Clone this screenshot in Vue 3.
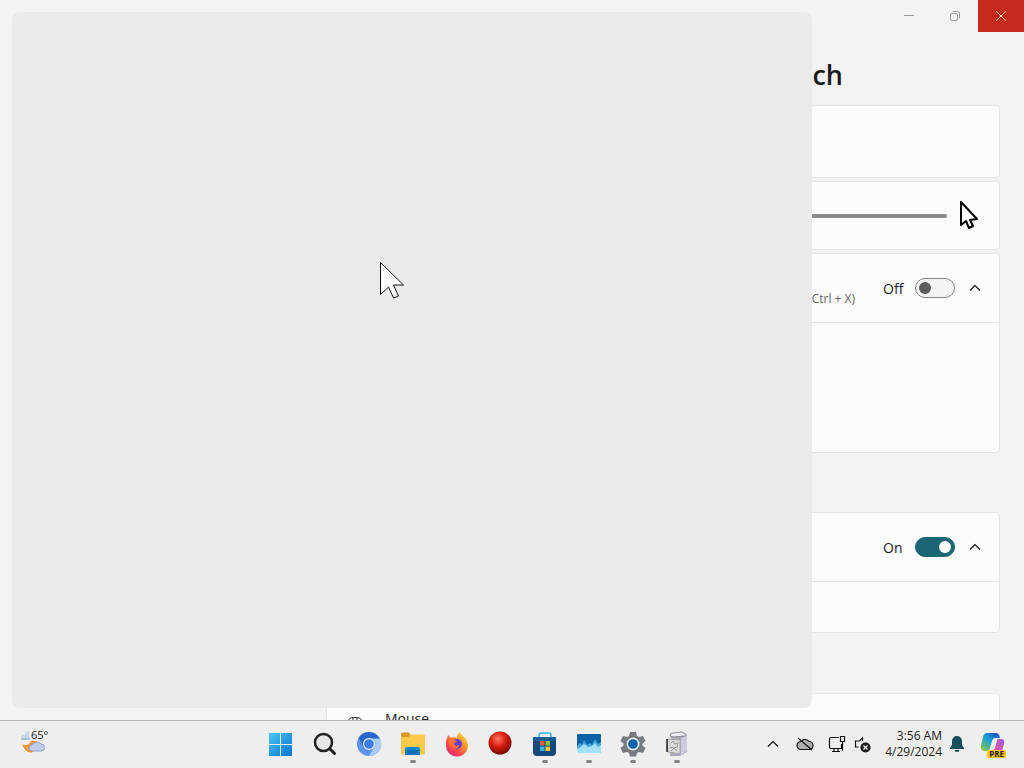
<template>
  <div class="desktop">
    <div class="settings">
      <!-- window buttons -->
      <header class="titlebar">
        <button class="win-btn" aria-label="Minimize">
          <svg width="12" height="12" viewBox="0 0 12 12"><path d="M1 5.5h10" /></svg>
        </button>
        <button class="win-btn" aria-label="Restore">
          <svg width="12" height="12" viewBox="0 0 12 12">
            <rect x="1.5" y="3.5" width="7" height="7" rx="1.5" />
            <path d="M3.5 1.5h5a2 2 0 0 1 2 2v5" />
          </svg>
        </button>
        <button class="win-btn close" aria-label="Close">
          <svg width="12" height="12" viewBox="0 0 12 12"><path d="M1 1l10 10M11 1L1 11" /></svg>
        </button>
      </header>

      <main class="content">
        <h1>ch</h1>

        <section class="card preview"></section>

        <section class="card">
          <div class="row">
            <input v-model="pointerSize" class="slider" type="range" min="0" max="100" aria-label="Size" />
            <svg class="size-icon" width="20" height="30" viewBox="0 0 20 30">
              <path d="M2 1v23l5-4 3 7 4-2-3-6 7-1z" />
            </svg>
          </div>
        </section>

        <section class="card tall">
          <div class="row">
            <span class="hint">Ctrl + X)</span>
            <label class="toggle">
              <span>{{ indicator ? 'On' : 'Off' }}</span>
              <input v-model="indicator" type="checkbox" />
            </label>
            <button class="expand" aria-label="Collapse">
              <svg width="12" height="12" viewBox="0 0 12 12"><path d="M1 8.5l5-5 5 5" /></svg>
            </button>
          </div>
        </section>

        <section class="card touch">
          <div class="row">
            <label class="toggle">
              <span>{{ touch ? 'On' : 'Off' }}</span>
              <input v-model="touch" type="checkbox" />
            </label>
            <button class="expand" aria-label="Collapse">
              <svg width="12" height="12" viewBox="0 0 12 12"><path d="M1 8.5l5-5 5 5" /></svg>
            </button>
          </div>
        </section>

        <section class="card related">
          <svg class="mouse-icon" width="16" height="20" viewBox="0 0 16 20">
            <path d="M1.5 6.500q0-4 5-4h3q5 0 5 4v6a6.5 6 0 0 1-13 0zM6 2.500v5M10 2.500v5M1.500 8h13" />
          </svg>
          <span>Mouse</span>
        </section>
      </main>

      <!-- window that is still loading -->
      <div class="splash"></div>
      <svg class="pointer" width="26" height="40" viewBox="0 0 26 40">
        <path d="M1.5 1.5v32l8-7.5 5 11 5-2-5-11h10z" />
      </svg>
    </div>

    <footer class="taskbar">
      <button class="weather" aria-label="Weather">
        <svg width="30" height="28" viewBox="0 0 30 28">
          <path d="M3 9h8V2a4 4 0 0 0-4 4 3 3 0 0 0-4 3z" fill="#c4d6e8" />
          <path d="M3 10h9" stroke="#8fb0d2" stroke-width="1.5" />
          <path d="M4 15c4 2 7 1 9-3 5-1 9 1 9 5l-7 6c-5 2-9-2-11-8z" fill="#f29a38" />
          <path d="M14 22a3 3 0 0 1 0-6 5 4 0 0 1 9-1 3.5 3.5 0 0 1 0 7z" fill="#c2cde9" stroke="#8c9fd0" />
        </svg>
        <span>65°</span>
      </button>

      <nav class="apps">
        <button v-for="app in apps" :key="app.id" class="app" :class="{ running: app.running }" :aria-label="app.name">
          <svg v-if="app.id === 'start'" width="26" height="26" viewBox="0 0 26 26">
            <defs>
              <linearGradient id="win" x2="1" y2="1">
                <stop offset="0" stop-color="#48c8f4" />
                <stop offset="1" stop-color="#0874d0" />
              </linearGradient>
            </defs>
            <path d="M1 2h11v11H1zM13 2h11v11H13zM1 14h11v11H1zM13 14h11v11H13z" fill="url(#win)" />
          </svg>

          <svg v-else-if="app.id === 'search'" width="26" height="26" viewBox="0 0 26 26">
            <circle cx="11.5" cy="11.5" r="8.5" fill="#e6e6e6" stroke="#222" stroke-width="2.5" />
            <path d="M17.5 17.5l5 5" stroke="#222" stroke-width="3" stroke-linecap="round" />
          </svg>

          <svg v-else-if="app.id === 'chromium'" width="26" height="26" viewBox="0 0 26 26">
            <circle cx="13" cy="13" r="12" fill="#5b94ee" />
            <path d="M2.6 7A12 12 0 0 1 23.4 7H13a6 6 0 0 0-5.2 9z" fill="#2c66cb" />
            <path d="M24.2 8A12 12 0 0 1 13 25l5.2-9A6 6 0 0 0 17 8z" fill="#a9cafb" />
            <circle cx="13" cy="13" r="6" fill="#e7effc" />
            <circle cx="13" cy="13" r="4.8" fill="#3b7ce5" />
          </svg>

          <svg v-else-if="app.id === 'explorer'" width="26" height="26" viewBox="0 0 26 26">
            <path d="M1 3a1.5 1.5 0 0 1 1.5-1.5H9l2 3v4H1z" fill="#d79a22" />
            <path d="M1 6h7l3-2.5h12.5A1.5 1.5 0 0 1 25 5v18.5H1z" fill="#fcca4b" />
            <path d="M5 24v-6a2 2 0 0 1 2-2h11a2 2 0 0 1 2 2v6z" fill="#1585cf" />
            <path d="M7 19h11v5H7z" fill="#0b71b5" />
          </svg>

          <svg v-else-if="app.id === 'firefox'" width="26" height="26" viewBox="0 0 26 26">
            <defs>
              <linearGradient id="fox" x1="1" y1="0" x2="0.2" y2="1">
                <stop offset="0" stop-color="#fff35a" />
                <stop offset="0.4" stop-color="#ff9a28" />
                <stop offset="0.75" stop-color="#f9414c" />
                <stop offset="1" stop-color="#dd2383" />
              </linearGradient>
            </defs>
            <path d="M3 7l1-3 3 3c2-1 4-1 6 0 0-3 1-5 3-6 1 4 8 6 8 13a11 11 0 0 1-22 1C1.500 12 2 9 3 7z" fill="url(#fox)" />
            <circle cx="13" cy="13" r="5" fill="#693dcc" />
            <path d="M5 9c4-1 6-1 8 2-2 0-3 1-3 2 1 2 3 2 5 1 0 3-3 4-6 3-3-1-5-4-4-8z" fill="#ff7139" />
          </svg>

          <svg v-else-if="app.id === 'ball'" width="26" height="26" viewBox="0 0 26 26">
            <defs>
              <radialGradient id="ball" cx="0.42" cy="0.33" r="0.65">
                <stop offset="0" stop-color="#ff7866" />
                <stop offset="0.5" stop-color="#d9200f" />
                <stop offset="1" stop-color="#7d0a06" />
              </radialGradient>
            </defs>
            <circle cx="12" cy="12" r="11.5" fill="url(#ball)" />
          </svg>

          <svg v-else-if="app.id === 'store'" width="26" height="26" viewBox="0 0 26 26">
            <path d="M7 7V4a2 2 0 0 1 2-2h8a2 2 0 0 1 2 2v3" fill="none" stroke="#35b7df" stroke-width="1.5" />
            <path d="M1 6h23v15a4 4 0 0 1-4 4H5a4 4 0 0 1-4-4z" fill="#154a78" />
            <path d="M1 6h23v4H1z" fill="#125f96" />
            <path d="M8 10h4.5v4.5H8z" fill="#ef5c35" />
            <path d="M13.5 10H18v4.5h-4.500z" fill="#8bc53f" />
            <path d="M8 15.5h4.5V20H8z" fill="#31b3ed" />
            <path d="M13.5 15.5H18V20h-4.500z" fill="#fdc630" />
          </svg>

          <svg v-else-if="app.id === 'monitor'" width="26" height="26" viewBox="0 0 26 26">
            <rect x="1" y="3" width="24" height="19" rx="1" fill="#0b62a5" />
            <path d="M1 15l3-3 2 2 2-5 3 5 3-2 2 2 3-6 3 5 3-2v11H1z" fill="#43a9dc" />
            <path d="M1 18l4-2 3-3 4 3 4-1 3-3 3 4 3-2v8H1z" fill="#a4e1f8" />
          </svg>

          <svg v-else-if="app.id === 'settings'" width="26" height="26" viewBox="0 0 26 26">
            <path
              d="M10 1h6l1 4 2 1 4-1 2.5 5-3 2.5v2l3 2.5-2.5 5-4-1-2 1-1 3.500h-6L9 22l-2-1-4 1-2.500-5 3-2.500v-2L.5 10 3 5l4 1 2-1z"
              fill="#777b80"
            />
            <circle cx="13" cy="13" r="6.5" fill="#e4edf5" />
            <circle cx="13" cy="13" r="4.8" fill="#0763b0" />
          </svg>

          <svg v-else width="26" height="26" viewBox="0 0 26 26">
            <path d="M7 3l12-2 4 3v17l-7 4H6z" fill="#aaa9b7" />
            <path d="M6 5q0-3 3-3l9-1q4 1 4 4l-12 1z" fill="#eeedf2" stroke="#8b8a94" />
            <path d="M17 7l6-2v15l-6 4z" fill="#cfcbe0" />
            <path d="M3 8l13 1v14l-12-2z" fill="#d7d7d7" stroke="#aaa" />
            <path d="M3 8v13" stroke="#222" stroke-width="1.5" />
            <path d="M7 12l2-2 2 3 3-1-1 4-3 1-3 3M6 17l3-1 4 4" stroke="#9a9a9a" fill="none" />
          </svg>
        </button>
      </nav>

      <div class="tray">
        <button class="tray-btn" aria-label="Hidden icons">
          <svg width="12" height="12" viewBox="0 0 12 12"><path d="M1 8.5l5-5 5 5" /></svg>
        </button>
        <button class="tray-btn" aria-label="OneDrive">
          <svg width="18" height="16" viewBox="0 0 18 16">
            <path d="M5 13.5a4 4 0 0 1 0-8 5 5 0 0 1 8 0 4 4 0 0 1 0 8z" fill="#b0b0b0" />
            <path d="M2 2l14 12" />
          </svg>
        </button>
        <button class="tray-btn" aria-label="Network">
          <svg width="18" height="18" viewBox="0 0 18 18">
            <path d="M11 2.5H3A1.5 1.5 0 0 0 1.5 4v8A1.5 1.5 0 0 0 3 13.500h10.500V9M6 13.500v3M10 13.500v3M4 16.500h8" />
            <path d="M12.5 1.5h4v5h-4zM14.5 6.5v9" />
          </svg>
        </button>
        <button class="tray-btn sound" aria-label="Volume">
          <svg width="18" height="18" viewBox="0 0 18 18">
            <path d="M8.5 6V3L5.500 6h-4v6h3" />
            <circle cx="11.5" cy="12.5" r="4.5" fill="#222" />
            <path d="M9.500 10.500l4 4M13.500 10.500l-4 4" class="cross" />
          </svg>
        </button>
        <button class="clock">
          <span>3:56 AM</span>
          <span>4/29/2024</span>
        </button>
        <button class="tray-btn bell" aria-label="Notifications">
          <svg width="14" height="16" viewBox="0 0 14 16">
            <path d="M7 0a5 5 0 0 1 5 5v4l2 3v1H0v-1l2-3V5a5 5 0 0 1 5-5zM4.5 14h5a2.5 2 0 0 1-5 0z" />
          </svg>
        </button>
        <button class="copilot" aria-label="Copilot">
          <svg width="26" height="26" viewBox="0 0 26 26">
            <defs>
              <linearGradient id="copA" x1="1" x2="0.2" y2="1">
                <stop offset="0" stop-color="#1847b8" />
                <stop offset="0.5" stop-color="#1c9dde" />
                <stop offset="1" stop-color="#7ccb49" />
              </linearGradient>
              <linearGradient id="copB" x1="1" x2="0" y2="1">
                <stop offset="0" stop-color="#a158e8" />
                <stop offset="0.6" stop-color="#e5569f" />
                <stop offset="1" stop-color="#fb9850" />
              </linearGradient>
            </defs>
            <path d="M7 2h9q3 0 4 5h-5q-2 0-3 3l-2 7q-1 3-4 3H4q-4-1-3-6l2-8q1-4 4-4z" fill="url(#copA)" />
            <path d="M18 8h4q3 1 2 5l-2 7q-1 4-4 4h-7q-2 0-3-4h3q3 0 4-3l2-7q0-2 1-2z" fill="url(#copB)" />
          </svg>
          <span class="badge">PRE</span>
        </button>
      </div>
    </footer>
  </div>
</template>

<script setup>
import { ref } from 'vue';

const pointerSize = ref(0);
const indicator = ref(false);
const touch = ref(true);

const apps = [
  { id: 'start', name: 'Start', running: false },
  { id: 'search', name: 'Search', running: false },
  { id: 'chromium', name: 'Chromium', running: false },
  { id: 'explorer', name: 'File Explorer', running: true },
  { id: 'firefox', name: 'Firefox', running: false },
  { id: 'ball', name: 'Red ball', running: false },
  { id: 'store', name: 'Store', running: true },
  { id: 'monitor', name: 'Monitor', running: true },
  { id: 'settings', name: 'Settings', running: true },
  { id: 'installer', name: 'Installer', running: true }
];
</script>

<style>
body {
  margin: 0;
  background: #f3f3f3;
}
</style>

<style scoped>
.desktop {
  display: flex;
  flex-direction: column;
  height: 100vh;
  overflow: hidden;
  background: #f3f3f3;
  color: #1b1b1b;
  font-family: "Open Sans", "Noto Sans", sans-serif;
  font-size: 14px;
  line-height: 20px;
}
button {
  display: flex;
  align-items: center;
  justify-content: center;
  padding: 0;
  border: none;
  background: none;
  color: inherit;
  font: inherit;
}
svg {
  display: block;
  flex: none;
}

/* settings window */
.settings {
  position: relative;
  flex: 1;
  min-height: 0;
  overflow: hidden;
}
.titlebar {
  display: flex;
  justify-content: flex-end;
}
.win-btn {
  width: 46px;
  height: 32px;
}
.win-btn svg {
  fill: none;
  stroke: #9a9a9a;
}
.win-btn.close {
  background: #c42b1c;
}
.win-btn.close svg {
  stroke: #fbe3c8;
}
.content {
  padding: 24px 24px 0 326px;
}
h1 {
  margin: 0 157px 11px 0;
  font-size: 27px;
  line-height: 38px;
  font-weight: 600;
  text-align: right;
}
.card {
  box-sizing: border-box;
  margin-bottom: 3px;
  border: 1px solid #e5e5e5;
  border-radius: 4px;
  background: #fcfcfc;
}
.preview {
  height: 73px;
}
.row {
  display: flex;
  align-items: center;
  justify-content: flex-end;
  height: 67px;
  padding-right: 18px;
}
.tall {
  height: 200px;
  margin-bottom: 59px;
}
.touch {
  height: 121px;
  margin-bottom: 60px;
}
.tall .row,
.touch .row {
  height: 68px;
  border-bottom: 1px solid #e5e5e5;
}
.slider {
  appearance: none;
  width: 200px;
  height: 20px;
  margin: 0 12px 0 0;
  background: none;
}
.slider::-webkit-slider-runnable-track {
  height: 4px;
  border-radius: 2px;
  background: #8a8a8a;
}
.slider::-webkit-slider-thumb {
  appearance: none;
  width: 20px;
  height: 20px;
  margin-top: -8px;
  border: 4px solid #fff;
  border-radius: 50%;
  background: #1a6674;
}
.size-icon {
  margin-right: 2px;
  fill: #fff;
  stroke: #000;
  stroke-width: 2;
  stroke-linejoin: round;
}
.hint {
  align-self: flex-end;
  margin: 0 28px 13px 0;
  color: #666;
  font-size: 12px;
}
.toggle {
  display: flex;
  align-items: center;
}
.toggle span {
  width: 32px;
  padding-top: 2px;
}
.toggle input {
  appearance: none;
  box-sizing: border-box;
  display: flex;
  align-items: center;
  width: 40px;
  height: 20px;
  margin: 0;
  padding: 0 3px;
  border: 1px solid #858585;
  border-radius: 10px;
  background: #f4f4f4;
}
.toggle input::before {
  content: "";
  width: 12px;
  height: 12px;
  border-radius: 50%;
  background: #5c5c5c;
}
.toggle input:checked {
  justify-content: flex-end;
  border-color: #1a6674;
  background: #1a6674;
}
.toggle input:checked::before {
  background: #fff;
}
.expand {
  margin-left: 14px;
}
.expand svg,
.tray-btn svg {
  fill: none;
  stroke: #111;
  stroke-width: 1.2;
}
.related {
  display: flex;
  gap: 22px;
  height: 69px;
  padding: 15px 20px;
}
.mouse-icon {
  margin-top: 6px;
  fill: none;
  stroke: #222;
}
.splash {
  position: absolute;
  top: 12px;
  right: 212px;
  bottom: 12px;
  left: 12px;
  border-radius: 8px;
  background: #eaeaea;
}
.pointer {
  position: absolute;
  top: 261px;
  left: 379px;
  fill: #fff;
  stroke: #111;
}

/* taskbar */
.taskbar {
  box-sizing: border-box;
  display: flex;
  height: 48px;
  padding-bottom: 2px;
  border-top: 1px solid #b9b9b9;
  background: #eee;
}
.weather {
  position: relative;
  align-items: flex-start;
  justify-content: flex-start;
  width: 259px;
  padding: 8px 18px;
}
.weather span {
  position: absolute;
  top: 6px;
  left: 31px;
  font-size: 11px;
  line-height: 16px;
}
.apps {
  display: flex;
}
.app {
  position: relative;
  width: 44px;
}
.running::after {
  content: "";
  position: absolute;
  bottom: 3px;
  left: 19px;
  width: 6px;
  height: 3px;
  border-radius: 2px;
  background: #858585;
}
.tray {
  display: flex;
  align-items: center;
  margin-left: auto;
  padding-right: 18px;
}
.tray-btn {
  width: 32px;
  height: 40px;
}
.tray-btn.sound {
  width: 20px;
}
.sound .cross {
  stroke: #fff;
}
.clock {
  flex-direction: column;
  align-items: flex-end;
  margin-left: 12px;
  font-size: 12px;
  line-height: 16px;
}
.tray-btn.bell {
  width: 30px;
}
.bell svg {
  fill: #174e5b;
  stroke: none;
}
.copilot {
  position: relative;
  width: 26px;
  height: 40px;
  margin-left: 8px;
}
.badge {
  position: absolute;
  right: 0;
  bottom: 6px;
  padding: 0 2px;
  border-radius: 2px;
  background: #fcc21b;
  color: #222;
  font-size: 8px;
  line-height: 8px;
  font-weight: 700;
}
</style>
